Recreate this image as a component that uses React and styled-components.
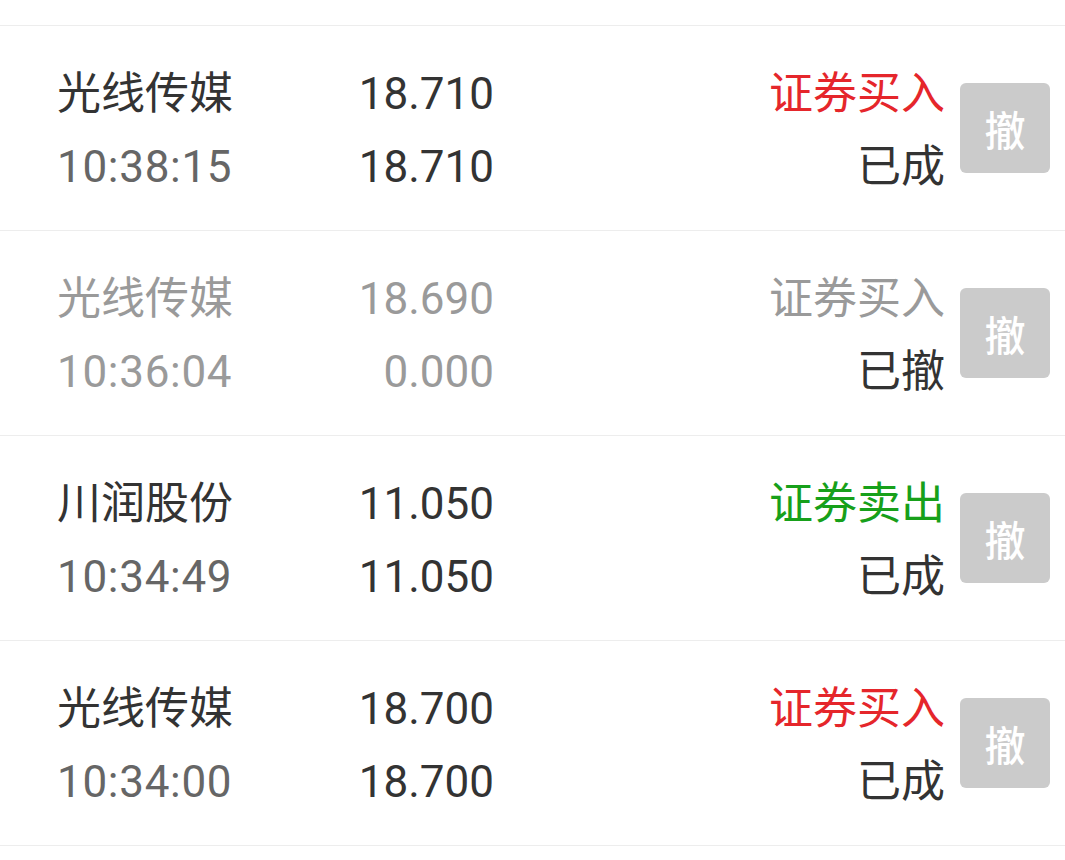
import React from 'react'
import styled, { createGlobalStyle } from 'styled-components'

const GlobalStyle = createGlobalStyle`
  body {
    margin: 0;
    background: #ffffff;
    font-family: Roboto, "Noto Sans CJK SC", sans-serif;
  }
`

const colors = {
  text: '#333333',
  sub: '#666666',
  muted: '#9a9a9a',
  buy: '#e5262b',
  sell: '#17a01a',
  line: '#ededed',
}

const orders = [
  { name: '光线传媒', time: '10:38:15', price: '18.710', deal: '18.710', type: '证券买入', side: 'buy', status: '已成', canceled: false },
  { name: '光线传媒', time: '10:36:04', price: '18.690', deal: '0.000', type: '证券买入', side: 'buy', status: '已撤', canceled: true },
  { name: '川润股份', time: '10:34:49', price: '11.050', deal: '11.050', type: '证券卖出', side: 'sell', status: '已成', canceled: false },
  { name: '光线传媒', time: '10:34:00', price: '18.700', deal: '18.700', type: '证券买入', side: 'buy', status: '已成', canceled: false },
]

const List = styled.div`
  padding-top: 25px;
  border-bottom: 1px solid ${colors.line};
`

const Row = styled.div`
  display: flex;
  align-items: center;
  height: 204px;
  padding: 0 15px 0 57px;
  border-top: 1px solid ${colors.line};
`

const Col = styled.div`
  display: flex;
  flex-direction: column;
  padding-top: 6px;
  font-size: 44px;
  line-height: 73px;
  white-space: nowrap;
`

const NameCol = styled(Col)`
  width: 200px;
`

const PriceCol = styled(Col)`
  width: 237px;
  text-align: right;
`

const StatusCol = styled(Col)`
  flex: 1;
  margin-right: -2px;
  text-align: right;
`

const Cell = styled.span`
  color: ${p => p.$color};
  letter-spacing: ${p => (p.$spaced ? '0.7px' : '0')};
`

const CancelButton = styled.div`
  width: 90px;
  height: 90px;
  margin-left: 17px;
  border-radius: 6px;
  background: #cbcbcb;
  color: #ffffff;
  font-size: 41px;
  font-weight: 500;
  display: flex;
  align-items: center;
  justify-content: center;
`

function OrderRow({ order }) {
  const main = order.canceled ? colors.muted : colors.text
  const sub = order.canceled ? colors.muted : colors.sub
  const typeColor = order.canceled ? colors.muted : colors[order.side]

  return (
    <Row>
      <NameCol>
        <Cell $color={main}>{order.name}</Cell>
        <Cell $color={sub} $spaced>{order.time}</Cell>
      </NameCol>
      <PriceCol>
        <Cell $color={main}>{order.price}</Cell>
        <Cell $color={main}>{order.deal}</Cell>
      </PriceCol>
      <StatusCol>
        <Cell $color={typeColor}>{order.type}</Cell>
        <Cell $color={colors.text}>{order.status}</Cell>
      </StatusCol>
      <CancelButton>撤</CancelButton>
    </Row>
  )
}

export default function App() {
  return (
    <>
      <GlobalStyle />
      <List>
        {orders.map((o, i) => <OrderRow key={i} order={o} />)}
      </List>
    </>
  )
}
